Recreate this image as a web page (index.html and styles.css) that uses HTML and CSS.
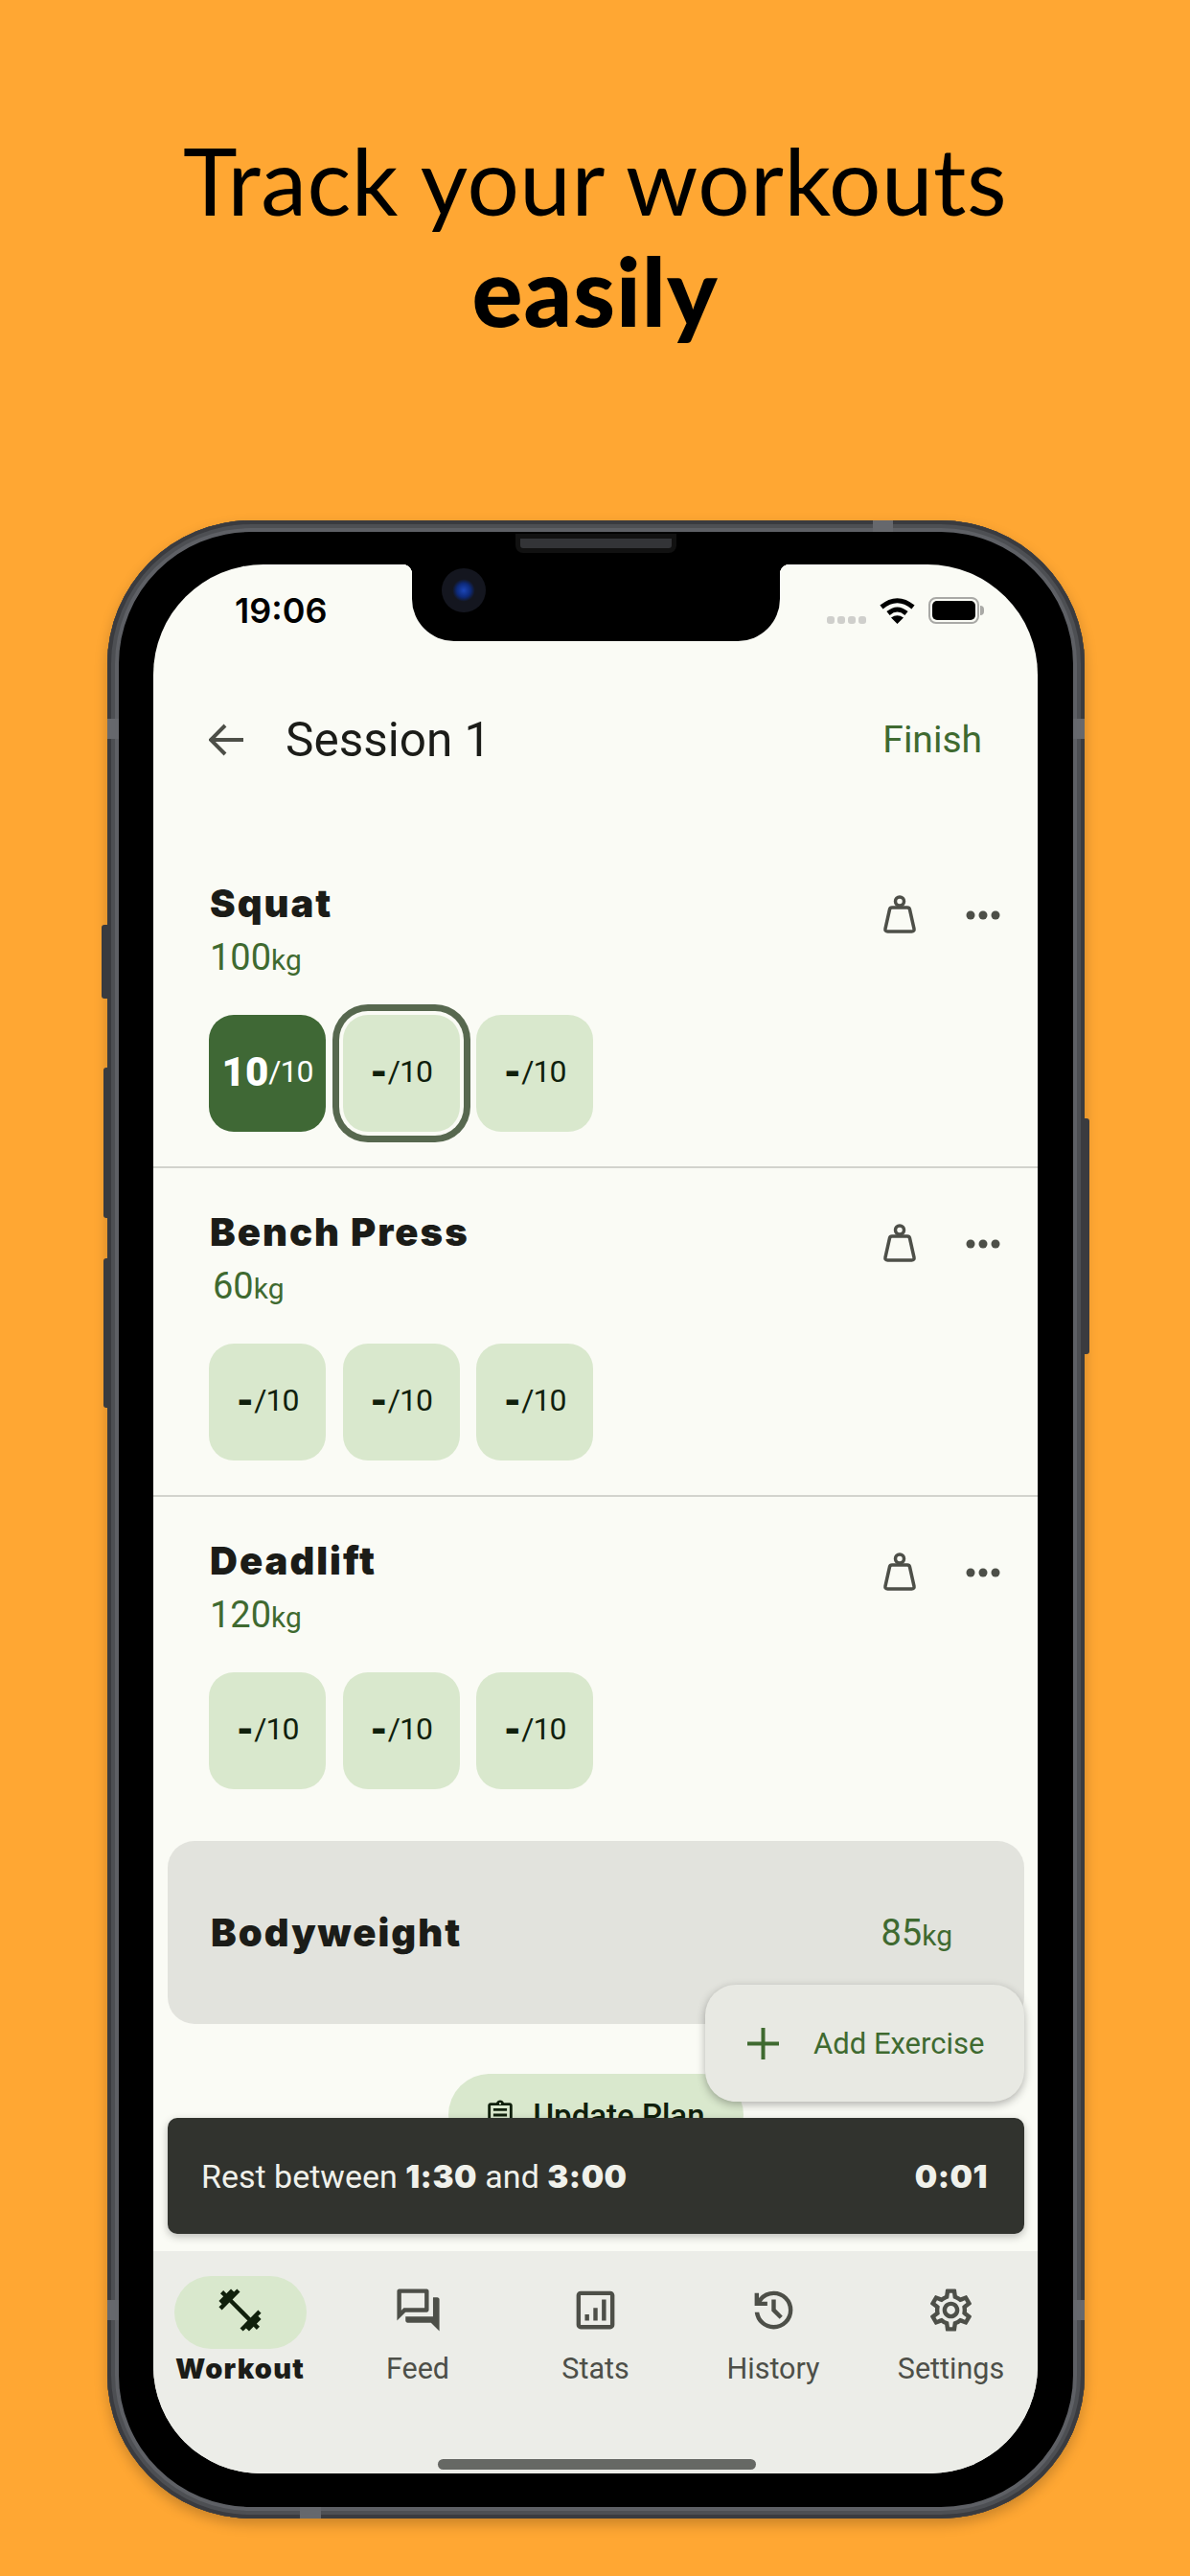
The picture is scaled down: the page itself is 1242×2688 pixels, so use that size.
FILE: index.html
```html
<!DOCTYPE html>
<html lang="en">
<head>
  <meta charset="UTF-8">
  <title>Track your workouts easily</title>
  <link rel="stylesheet" href="styles.css">
</head>
<body>
  <svg class="defs" width="0" height="0">
    <symbol id="weight" viewBox="0 0 36 42">
      <circle cx="18" cy="6.500" r="4.500" fill="none" stroke="currentColor" stroke-width="3.500"/>
      <path d="M10 13h16q2 0 2.500 2L33 35q.5 3-2.500 3h-25q-3 0-2.500-3L7.500 15q.5-2 2.500-2z" fill="none" stroke="currentColor" stroke-width="3.500"/>
    </symbol>
    <symbol id="dots" viewBox="0 0 36 12">
      <circle cx="5" cy="6" r="4.500" fill="currentColor"/>
      <circle cx="18" cy="6" r="4.500" fill="currentColor"/>
      <circle cx="31" cy="6" r="4.500" fill="currentColor"/>
    </symbol>
  </svg>

  <h1 class="headline">Track your workouts<br><b>easily</b></h1>

  <div class="phone">
    <span class="btn btn-mute"></span>
    <span class="btn btn-up"></span>
    <span class="btn btn-down"></span>
    <span class="btn btn-power"></span>
    <span class="seam seam-top"></span>
    <span class="seam seam-bottom"></span>
    <span class="seam seam-left1"></span>
    <span class="seam seam-left2"></span>
    <span class="seam seam-right1"></span>
    <span class="seam seam-right2"></span>
    <span class="speaker"></span>

    <div class="screen">
      <div class="notch"><span class="camera"></span></div>

      <div class="status">
        <span class="time">19:06</span>
        <div class="status-right">
          <span class="signal"><i></i><i></i><i></i><i></i></span>
          <svg class="wifi" width="37" height="27" viewBox="0 0 37 27">
            <path d="M2 9.500Q18.500-4 35 9.500M9 16Q18.500 8 28 16" fill="none" stroke="#000" stroke-width="5"/>
            <path d="M18.500 27L12 20.500Q18.500 16 25 20.500z" fill="#000"/>
          </svg>
          <span class="battery"><i></i></span>
        </div>
      </div>

      <div class="appbar">
        <svg class="back" width="36" height="34" viewBox="0 0 36 34">
          <path d="M36 17H3M17 2L2 17l15 15" fill="none" stroke="#4d4f48" stroke-width="4"/>
        </svg>
        <span class="appbar-title">Session 1</span>
        <span class="finish">Finish</span>
      </div>

      <div class="main">
        <section class="exercise">
          <div class="exercise-head">
            <div class="exercise-info">
              <div class="exercise-name">Squat</div>
              <div class="weight">100<small>kg</small></div>
            </div>
            <div class="actions">
              <svg class="icon-weight"><use href="#weight"/></svg>
              <svg class="icon-dots"><use href="#dots"/></svg>
            </div>
          </div>
          <div class="sets">
            <div class="set done"><b>10</b><span>/10</span></div>
            <div class="set current"><b>-</b><span>/10</span></div>
            <div class="set"><b>-</b><span>/10</span></div>
          </div>
        </section>

        <section class="exercise">
          <div class="exercise-head">
            <div class="exercise-info">
              <div class="exercise-name">Bench Press</div>
              <div class="weight weight-short">60<small>kg</small></div>
            </div>
            <div class="actions">
              <svg class="icon-weight"><use href="#weight"/></svg>
              <svg class="icon-dots"><use href="#dots"/></svg>
            </div>
          </div>
          <div class="sets">
            <div class="set"><b>-</b><span>/10</span></div>
            <div class="set"><b>-</b><span>/10</span></div>
            <div class="set"><b>-</b><span>/10</span></div>
          </div>
        </section>

        <section class="exercise last">
          <div class="exercise-head">
            <div class="exercise-info">
              <div class="exercise-name">Deadlift</div>
              <div class="weight">120<small>kg</small></div>
            </div>
            <div class="actions">
              <svg class="icon-weight"><use href="#weight"/></svg>
              <svg class="icon-dots"><use href="#dots"/></svg>
            </div>
          </div>
          <div class="sets">
            <div class="set"><b>-</b><span>/10</span></div>
            <div class="set"><b>-</b><span>/10</span></div>
            <div class="set"><b>-</b><span>/10</span></div>
          </div>
        </section>

        <div class="bodyweight">
          <span class="exercise-name">Bodyweight</span>
          <span class="weight">85<small>kg</small></span>
        </div>

        <div class="update-plan">
          <svg width="34" height="34" viewBox="0 0 24 24"><path fill="#10200c" d="M7 15h7v2H7zm0-4h10v2H7zm0-4h10v2H7zm12-4h-4.180C14.400 1.840 13.300 1 12 1c-1.300 0-2.400.84-2.820 2H5c-1.100 0-2 .9-2 2v14c0 1.100.9 2 2 2h14c1.100 0 2-.9 2-2V5c0-1.100-.9-2-2-2zm-7-.25c.41 0 .75.34.75.75s-.34.75-.75.75-.75-.34-.75-.75.34-.75.75-.75zM19 19H5V5h14v14z"/></svg>
          <span>Update Plan</span>
        </div>
      </div>

      <div class="fab">
        <svg width="33" height="33" viewBox="0 0 33 33"><path d="M16.500 0v33M0 16.500h33" stroke="#3f6a30" stroke-width="4"/></svg>
        <span>Add Exercise</span>
      </div>

      <div class="snackbar">
        <span>Rest between <b>1:30</b> and <b>3:00</b></span>
        <b>0:01</b>
      </div>

      <nav class="nav">
        <div class="nav-item active">
          <span class="nav-icon"><svg width="53" height="53" viewBox="0 0 24 24"><path d="M20.570 14.860L22 13.430 20.570 12 17 15.570 8.430 7 12 3.430 10.570 2 9.140 3.430 7.710 2 5.570 4.140 4.140 2.710 2.710 4.140l1.430 1.430L2 7.710l1.430 1.430L2 10.570 3.430 12 7 8.430 15.570 17 12 20.570 13.430 22l1.430-1.430L16.290 22l2.140-2.140 1.430 1.430 1.430-1.430-1.430-1.430L22 16.290z"/></svg></span>
          <span class="nav-label">Workout</span>
        </div>
        <div class="nav-item">
          <span class="nav-icon"><svg width="53" height="53" viewBox="0 0 24 24"><path d="M15 4v7H5.170l-.59.59-.58.58V4h11m1-2H3c-.55 0-1 .45-1 1v14l4-4h10c.55 0 1-.45 1-1V3c0-.55-.45-1-1-1zm5 4h-2v9H6v2c0 .55.45 1 1 1h11l4 4V7c0-.55-.45-1-1-1z"/></svg></span>
          <span class="nav-label">Feed</span>
        </div>
        <div class="nav-item">
          <span class="nav-icon"><svg width="53" height="53" viewBox="0 0 24 24"><path d="M19 3H5c-1.100 0-2 .9-2 2v14c0 1.100.9 2 2 2h14c1.100 0 2-.9 2-2V5c0-1.100-.9-2-2-2zm0 16H5V5h14v14zM7 14h2v3H7zm4-3h2v6h-2zm4-4h2v10h-2z"/></svg></span>
          <span class="nav-label">Stats</span>
        </div>
        <div class="nav-item">
          <span class="nav-icon"><svg width="53" height="53" viewBox="0 0 24 24"><path d="M12 21q-3.450 0-6.012-2.288T3.050 13H5.100q.35 2.600 2.313 4.300T12 19q2.925 0 4.963-2.037T19 12q0-2.925-2.037-4.962T12 5q-1.725 0-3.225.8T6.250 8H9v2H3V4h2v2.350q1.275-1.600 3.113-2.475T12 3q3.750 0 6.375 2.625T21 12q0 3.750-2.625 6.375T12 21zm2.800-4.800L11 12.400V7h2v4.600l3.200 3.200-1.400 1.400z"/></svg></span>
          <span class="nav-label">History</span>
        </div>
        <div class="nav-item">
          <span class="nav-icon"><svg width="53" height="53" viewBox="0 0 24 24"><path d="M19.430 12.980c.04-.32.07-.64.07-.98 0-.34-.03-.66-.07-.98l2.110-1.650c.19-.15.24-.42.12-.64l-2-3.460c-.09-.16-.26-.25-.44-.25-.06 0-.12.01-.17.03l-2.490 1c-.52-.4-1.080-.73-1.690-.98l-.38-2.650C14.460 2.180 14.250 2 14 2h-4c-.25 0-.46.18-.49.42l-.38 2.650c-.61.25-1.170.59-1.690.98l-2.490-1c-.06-.02-.12-.03-.18-.03-.17 0-.34.09-.43.25l-2 3.460c-.13.22-.07.49.12.64l2.110 1.650c-.04.32-.07.65-.07.98 0 .33.03.66.07.98l-2.110 1.650c-.19.15-.24.42-.12.64l2 3.460c.09.16.26.25.44.25.06 0 .12-.01.17-.03l2.490-1c.52.4 1.080.73 1.690.98l.38 2.650c.03.24.24.42.49.42h4c.25 0 .46-.18.49-.42l.38-2.650c.61-.25 1.170-.59 1.690-.98l2.490 1c.06.02.12.03.18.03.17 0 .34-.09.43-.25l2-3.460c.12-.22.07-.49-.12-.64l-2.110-1.650zm-1.980-1.710c.04.31.05.52.05.73 0 .21-.02.43-.05.73l-.14 1.130.89.7 1.080.84-.7 1.210-1.270-.51-1.040-.42-.9.68c-.43.32-.84.56-1.250.73l-1.060.43-.16 1.130-.2 1.350h-1.400l-.19-1.350-.16-1.130-1.060-.43c-.43-.18-.83-.41-1.230-.71l-.91-.7-1.060.43-1.270.51-.7-1.210 1.080-.84.89-.7-.14-1.130c-.03-.31-.05-.54-.05-.74s.02-.43.05-.73l.14-1.130-.89-.7-1.080-.84.7-1.210 1.270.51 1.040.42.9-.68c.43-.32.84-.56 1.250-.73l1.060-.43.16-1.130.2-1.350h1.390l.19 1.350.16 1.130 1.060.43c.43.18.83.41 1.230.71l.91.7 1.060-.43 1.270-.51.7 1.210-1.070.85-.89.7.14 1.130zM12 8c-2.210 0-4 1.790-4 4s1.790 4 4 4 4-1.790 4-4-1.790-4-4-4zm0 6c-1.100 0-2-.9-2-2s.9-2 2-2 2 .9 2 2-.9 2-2 2z"/></svg></span>
          <span class="nav-label">Settings</span>
        </div>
      </nav>

      <div class="home-bar"></div>
    </div>
  </div>
</body>
</html>
```

FILE: styles.css
```css
* {
  box-sizing: border-box;
}
html, body {
  margin: 0;
  padding: 0;
}
body {
  width: 1242px;
  height: 2688px;
  overflow: hidden;
  background: #ffa733;
  font-family: 'Roboto', sans-serif;
}
.defs {
  display: block;
  height: 0;
}
.headline {
  margin: 0;
  padding-top: 130px;
  height: 543px;
  text-align: center;
  font-family: 'Lato', sans-serif;
  font-size: 96px;
  font-weight: 400;
  line-height: 115px;
  letter-spacing: 0.5px;
  color: #000;
}
.headline b {
  font-size: 99px;
  font-weight: 900;
  letter-spacing: 1px;
}

/* device frame */
.phone {
  position: relative;
  width: 1020px;
  height: 2085px;
  margin-left: 112px;
  padding: 46px 49px 47px 48px;
  background: #000;
  border-radius: 150px;
  box-shadow: inset 0 0 0 4px #3a3b3f, inset 0 0 0 8px #4d4f53, inset 0 0 0 12px #5e6065, 0 6px 14px rgba(0,0,0,0.22);
}
.btn {
  position: absolute;
  background: #3a3b3f;
}
.btn-mute {
  left: -6px;
  top: 422px;
  width: 6px;
  height: 77px;
  border-radius: 3px 0 0 3px;
}
.btn-up {
  left: -4px;
  top: 571px;
  width: 4px;
  height: 157px;
  border-radius: 3px 0 0 3px;
}
.btn-down {
  left: -4px;
  top: 770px;
  width: 4px;
  height: 156px;
  border-radius: 3px 0 0 3px;
}
.btn-power {
  right: -5px;
  top: 624px;
  width: 5px;
  height: 246px;
  border-radius: 0 3px 3px 0;
}
.seam {
  position: absolute;
  background: #66686d;
}
.seam-top {
  left: 799px;
  top: 0;
  width: 21px;
  height: 12px;
}
.seam-bottom {
  left: 201px;
  bottom: 0;
  width: 22px;
  height: 12px;
}
.seam-left1, .seam-left2, .seam-right1, .seam-right2 {
  width: 12px;
  height: 21px;
}
.seam-left1 {
  left: 0;
  top: 207px;
}
.seam-left2 {
  left: 0;
  top: 1857px;
}
.seam-right1 {
  right: 0;
  top: 207px;
}
.seam-right2 {
  right: 0;
  top: 1857px;
}
.speaker {
  position: absolute;
  left: 426px;
  top: 14px;
  width: 168px;
  height: 20px;
  background: #333437;
  border: 5px solid #111;
  border-radius: 0 0 8px 8px;
  z-index: 2;
}

/* screen */
.screen {
  position: relative;
  display: flex;
  flex-direction: column;
  height: 100%;
  overflow: hidden;
  background: #fafbf5;
  border-radius: 115px 115px 112px 112px;
}
.notch {
  position: absolute;
  left: 270px;
  top: -1px;
  width: 384px;
  height: 81px;
  background: #000;
  border-radius: 0 0 44px 44px;
  z-index: 3;
}
.notch::before, .notch::after {
  content: "";
  position: absolute;
  top: 1px;
  width: 10px;
  height: 10px;
}
.notch::before {
  left: -10px;
  background: radial-gradient(circle at 0 100%, transparent 10px, #000 10.500px);
}
.notch::after {
  right: -10px;
  background: radial-gradient(circle at 100% 100%, transparent 10px, #000 10.500px);
}
.camera {
  position: absolute;
  left: 31px;
  top: 5px;
  width: 46px;
  height: 46px;
  border-radius: 50%;
  background: radial-gradient(circle, #1c46b8 0, #0d2a7a 22%, #14161f 36%, #14161f 100%);
}
.status {
  flex: none;
  display: flex;
  align-items: center;
  justify-content: space-between;
  height: 96px;
  padding: 0 61px 0 85px;
}
.time {
  font-family: 'Inter', sans-serif;
  font-size: 36px;
  font-weight: 600;
  color: #000;
}
.status-right {
  display: flex;
  align-items: center;
}
.signal {
  display: flex;
  gap: 3px;
  margin: 20px 14px 0 0;
}
.signal i {
  width: 8px;
  height: 8px;
  border-radius: 3px;
  background: #cfcfcc;
}
.wifi {
  margin-right: 14px;
}
.battery {
  position: relative;
  width: 53px;
  height: 28px;
  padding: 2px;
  border: 2px solid #a9a9a6;
  border-radius: 8px;
}
.battery i {
  display: block;
  height: 100%;
  background: #000;
  border-radius: 5px;
}
.battery::after {
  content: "";
  position: absolute;
  right: -7px;
  top: 7px;
  width: 4px;
  height: 10px;
  background: #a9a9a6;
  border-radius: 0 4px 4px 0;
}
.appbar {
  flex: none;
  display: flex;
  align-items: center;
  height: 174px;
  margin-bottom: 17px;
  padding: 0 58px 0 58px;
}
.back {
  margin-right: 44px;
}
.appbar-title {
  flex: 1;
  font-size: 49.500px;
  font-weight: 400;
  color: #1b1c18;
}
.finish {
  font-size: 39px;
  font-weight: 400;
  color: #3f6a30;
}

/* exercises */
.main {
  flex: 1;
  min-height: 0;
  overflow: hidden;
}
.exercise {
  padding: 41px 39px 36px 58px;
  border-bottom: 2px solid #d2d3cd;
}
.exercise.last {
  padding-bottom: 38px;
  border-bottom: none;
}
.exercise-head {
  display: flex;
  justify-content: space-between;
}
.exercise-info {
  padding-left: 1px;
}
.exercise-name {
  font-family: 'Inter', sans-serif;
  font-size: 40px;
  font-weight: 900;
  line-height: 52px;
  letter-spacing: 2px;
  color: #1b1c18;
}
.weight {
  margin-top: 4px;
  font-size: 38px;
  line-height: 52px;
  color: #3f6a30;
}
.weight small {
  font-size: 30px;
  line-height: 1;
}
.weight-short {
  padding-left: 3px;
}
.actions {
  display: flex;
  align-items: center;
  gap: 51px;
  height: 42px;
  margin-top: 17px;
  color: #4d4f48;
}
.icon-weight {
  width: 36px;
  height: 42px;
}
.icon-dots {
  width: 36px;
  height: 12px;
}
.sets {
  display: flex;
  gap: 17.500px;
  margin-top: 34px;
}
.set {
  display: flex;
  align-items: center;
  justify-content: center;
  width: 122px;
  height: 122px;
  padding-bottom: 4px;
  border-radius: 26px;
  background: #d9e8cd;
  color: #10200c;
  font-size: 32px;
}
.set span {
  letter-spacing: -1px;
}
.set b {
  font-size: 42px;
  font-weight: 900;
}
.set.done {
  background: #3f6835;
  color: #fff;
}
.set.current {
  box-shadow: 0 0 0 4px #fafbf5, 0 0 0 11px #57684f;
}
.bodyweight {
  display: flex;
  align-items: center;
  justify-content: space-between;
  height: 191px;
  margin: 16px 14px 0 15px;
  padding: 0 75px 0 45px;
  background: #e2e3dd;
  border-radius: 28px;
}
.bodyweight .weight {
  margin-top: 0;
}
.update-plan {
  display: flex;
  align-items: center;
  gap: 18px;
  width: 308px;
  height: 86px;
  margin: 52px auto 0;
  padding-left: 37px;
  background: #d9e8cd;
  border-radius: 43px;
  color: #10200c;
  font-size: 33px;
  font-weight: 500;
}

/* overlays on the list */
.fab {
  position: absolute;
  right: 14px;
  bottom: 388px;
  display: flex;
  align-items: center;
  gap: 36px;
  width: 333px;
  height: 122px;
  padding-left: 44px;
  background: #e8e9e3;
  border-radius: 32px;
  box-shadow: 0 3px 10px rgba(0,0,0,0.3);
  color: #3f6a30;
  font-size: 31px;
  font-weight: 400;
}
.snackbar {
  position: absolute;
  left: 15px;
  right: 14px;
  bottom: 250px;
  display: flex;
  align-items: center;
  justify-content: space-between;
  height: 121px;
  padding: 0 38px 0 35px;
  background: #31332e;
  border-radius: 10px;
  box-shadow: 0 3px 8px rgba(0,0,0,0.25);
  color: #f0f1eb;
  font-size: 34px;
}
.snackbar b {
  font-family: 'Inter', sans-serif;
  font-size: 33px;
  font-weight: 900;
  letter-spacing: 0.5px;
}

/* bottom navigation */
.nav {
  flex: none;
  display: flex;
  justify-content: center;
  height: 232px;
  padding-top: 26px;
  background: #ecede8;
}
.nav-item {
  flex: none;
  width: 185.500px;
  display: flex;
  flex-direction: column;
  align-items: center;
  color: #4d4f48;
}
.nav-icon {
  display: flex;
  align-items: center;
  justify-content: center;
  width: 138px;
  height: 76px;
  padding-bottom: 6px;
  border-radius: 38px;
}
.nav-icon svg {
  fill: currentColor;
}
.nav-label {
  font-size: 30.500px;
  line-height: 42px;
}
.nav-item.active .nav-icon {
  background: #d9e8cd;
  color: #10200c;
}
.nav-item.active .nav-label {
  font-family: 'Inter', sans-serif;
  font-size: 29px;
  font-weight: 900;
  letter-spacing: 1.200px;
  color: #1b1c18;
}
.home-bar {
  position: absolute;
  left: 297px;
  bottom: 4px;
  width: 332px;
  height: 11px;
  background: #666864;
  border-radius: 6px;
}
```
